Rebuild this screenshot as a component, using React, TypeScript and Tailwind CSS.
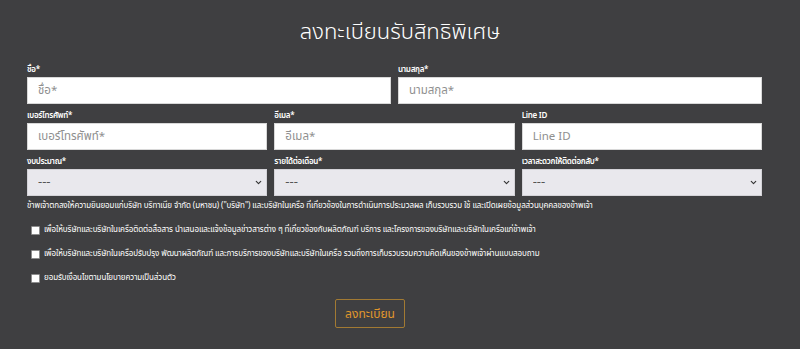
import * as React from "react";
import { ChevronDown } from "lucide-react";

const FONT = "font-['Noto_Sans_Thai','Noto_Sans','Liberation_Sans',sans-serif]";

function Label({ children }: { children: React.ReactNode }) {
  return (
    <div className="h-[13px] text-[8px] leading-[13px] font-semibold tracking-[-0.3px] text-white">{children}</div>
  );
}

function TextField({ label, placeholder }: { label: string; placeholder: string }) {
  return (
    <div className="flex flex-col">
      <Label>{label}</Label>
      <input
        placeholder={placeholder}
        className="h-[27px] w-full bg-white border border-[#d8d8d8] px-[10px] text-[11.5px] text-[#333] placeholder:text-[#8f8f8f] outline-none"
      />
    </div>
  );
}

function SelectField({ label }: { label: string }) {
  return (
    <div className="flex flex-col">
      <Label>{label}</Label>
      <div className="relative">
        <select className="h-[27px] w-full appearance-none bg-[#e9e8ed] border border-[#d4d3d8] px-[10px] text-[13px] text-[#555] outline-none">
          <option>---</option>
        </select>
        <ChevronDown
          size={9}
          strokeWidth={3}
          className="pointer-events-none absolute right-[4px] top-[9px] text-[#333]"
        />
      </div>
    </div>
  );
}

function Check({ children }: { children: React.ReactNode }) {
  return (
    <label className="flex h-[24px] items-center gap-[4px] pl-[4px] text-[8px] tracking-[-0.1px] text-white">
      <span className="h-[9px] w-[9px] shrink-0 rounded-[1px] border border-[#8d8d8d] bg-white" />
      <span>{children}</span>
    </label>
  );
}

export default function App() {
  return (
    <div className={`${FONT} min-h-[349px] w-full bg-[#3f3f41] px-[27px] pt-[16px]`}>
      <h1 className="text-center text-[22px] leading-[34px] font-light text-white">ลงทะเบียนรับสิทธิพิเศษ</h1>
      <div className="mt-[14px] flex w-[735px] flex-col gap-[6px]">
        <div className="grid grid-cols-2 gap-[7px]">
          <TextField label="ชื่อ*" placeholder="ชื่อ*" />
          <TextField label="นามสกุล*" placeholder="นามสกุล*" />
        </div>
        <div className="grid grid-cols-3 gap-[7px]">
          <TextField label="เบอร์โทรศัพท์*" placeholder="เบอร์โทรศัพท์*" />
          <TextField label="อีเมล*" placeholder="อีเมล*" />
          <TextField label="Line ID" placeholder="Line ID" />
        </div>
        <div className="grid grid-cols-3 gap-[7px]">
          <SelectField label="งบประมาณ*" />
          <SelectField label="รายได้ต่อเดือน*" />
          <SelectField label="เวลาสะดวกให้ติดต่อกลับ*" />
        </div>
      </div>
      <p className="mt-[3px] text-[8px] leading-[14px] tracking-[-0.1px] text-white">
        ข้าพเจ้าตกลงให้ความยินยอมแก่บริษัท บริทาเนีย จำกัด (มหาชน) ("บริษัท") และบริษัทในเครือ ที่เกี่ยวข้องในการดำเนินการประมวลผล เก็บรวบรวม ใช้ และเปิดเผยข้อมูลส่วนบุคคลของข้าพเจ้า
      </p>
      <div className="mt-[5px] flex flex-col">
        <Check>เพื่อให้บริษัทและบริษัทในเครือติดต่อสื่อสาร นำเสนอและแจ้งข้อมูลข่าวสารต่าง ๆ ที่เกี่ยวข้องกับผลิตภัณฑ์ บริการ และโครงการของบริษัทและบริษัทในเครือแก่ข้าพเจ้า</Check>
        <Check>เพื่อให้บริษัทและบริษัทในเครือปรับปรุง พัฒนาผลิตภัณฑ์ และการบริการของบริษัทและบริษัทในเครือ รวมถึงการเก็บรวบรวมความคิดเห็นของข้าพเจ้าผ่านแบบสอบถาม</Check>
        <Check>ยอมรับเงื่อนไขตามนโยบายความเป็นส่วนตัว</Check>
      </div>
      <div className="mt-[9px] flex pl-[308px]">
        <button className="h-[29px] w-[70px] rounded-[2px] border border-[#a27a33] text-[12px] text-[#e0972c]">
          ลงทะเบียน
        </button>
      </div>
    </div>
  );
}
